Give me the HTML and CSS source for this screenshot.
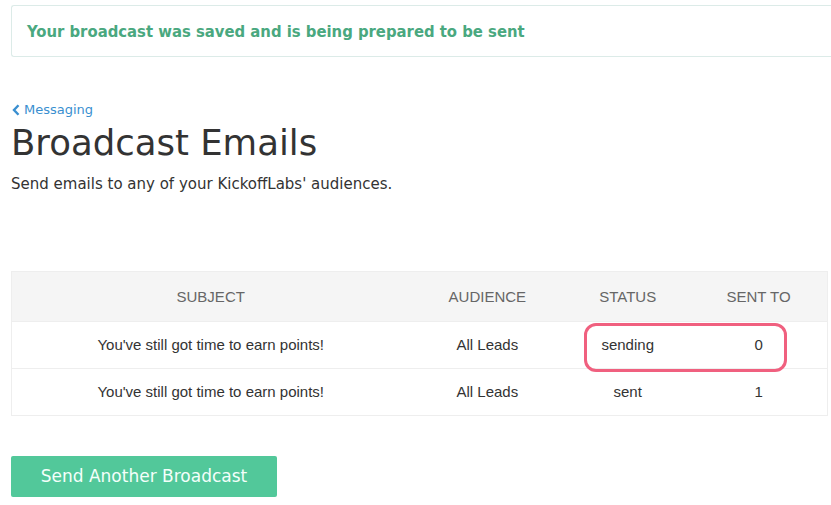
FILE: index.html
```html
<!DOCTYPE html>
<html lang="en">
<head>
<meta charset="utf-8">
<title>Broadcast Emails</title>
<link rel="stylesheet" href="styles.css">
</head>
<body>
<div class="page">
  <div class="alert">Your broadcast was saved and is being prepared to be sent</div>

  <a class="back" href="#">
    <svg class="back-icon" viewBox="0 0 8 12" width="8" height="12"><path d="M6.5 1.2 L2 6 L6.5 10.8" fill="none" stroke="currentColor" stroke-width="2.4"/></svg>
    Messaging
  </a>
  <h1 class="title">Broadcast Emails</h1>
  <p class="lead">Send emails to any of your KickoffLabs' audiences.</p>

  <table class="broadcasts">
    <thead>
      <tr>
        <th class="col-subject">SUBJECT</th>
        <th class="col-audience">AUDIENCE</th>
        <th class="col-status">STATUS</th>
        <th class="col-sent">SENT TO</th>
      </tr>
    </thead>
    <tbody>
      <tr>
        <td>You've still got time to earn points!</td>
        <td>All Leads</td>
        <td class="highlight-cell">sending<span class="highlight"></span></td>
        <td>0</td>
      </tr>
      <tr>
        <td>You've still got time to earn points!</td>
        <td>All Leads</td>
        <td>sent</td>
        <td>1</td>
      </tr>
    </tbody>
  </table>

  <a class="btn" href="#">Send Another Broadcast</a>
</div>
</body>
</html>
```

FILE: styles.css
```css
html, body {
  margin: 0;
  padding: 0;
  background: #fff;
}

.page {
  padding: 5px 0 0 11px;
  font-family: "DejaVu Sans", Verdana, sans-serif;
  color: #333;
}

.alert {
  height: 52px;
  box-sizing: border-box;
  border: 1px solid #dcebe8;
  border-right: none;
  border-radius: 3px 0 0 3px;
  padding: 0 15px;
  display: flex;
  align-items: center;
  font-family: "DejaVu Sans", sans-serif;
  font-stretch: condensed;
  font-weight: bold;
  font-size: 16.5px;
  color: #4aa87f;
}

.back {
  display: inline-flex;
  align-items: center;
  gap: 4px;
  margin-top: 45px;
  font-size: 13px;
  color: #3a8fd0;
  text-decoration: none;
}

.back-icon {
  margin-left: 1px;
}

.title {
  margin: 3px 0 0;
  font-size: 35.5px;
  font-weight: normal;
  line-height: 40px;
  color: #333;
}

.lead {
  margin: 11px 0 0;
  font-size: 15px;
  line-height: 20px;
}

.broadcasts {
  margin-top: 77px;
  width: 817px;
  border-collapse: collapse;
  border: 1px solid #eee;
  font-family: "Liberation Sans", Arial, sans-serif;
  font-size: 15px;
  color: #333;
}

.broadcasts th {
  height: 49px;
  background: #f5f5f5;
  font-weight: normal;
  color: #666;
  text-align: center;
  padding: 0;
}

.broadcasts td {
  height: 46px;
  text-align: center;
  padding: 0;
  border-top: 1px solid #eee;
}

.col-subject { width: 398px; }
.col-audience { width: 156px; }
.col-status { width: 125px; }
.col-sent { width: 137px; }

.highlight-cell {
  position: relative;
}

.highlight {
  position: absolute;
  left: 19px;
  top: 1px;
  width: 197px;
  height: 43px;
  border: 3px solid #f0607f;
  border-radius: 12px;
  pointer-events: none;
}

.btn {
  display: inline-block;
  margin-top: 40px;
  width: 266px;
  height: 41px;
  line-height: 41px;
  text-align: center;
  background: #52c89a;
  color: #f4fffa;
  border-radius: 2px;
  font-size: 17px;
  text-decoration: none;
}
```
